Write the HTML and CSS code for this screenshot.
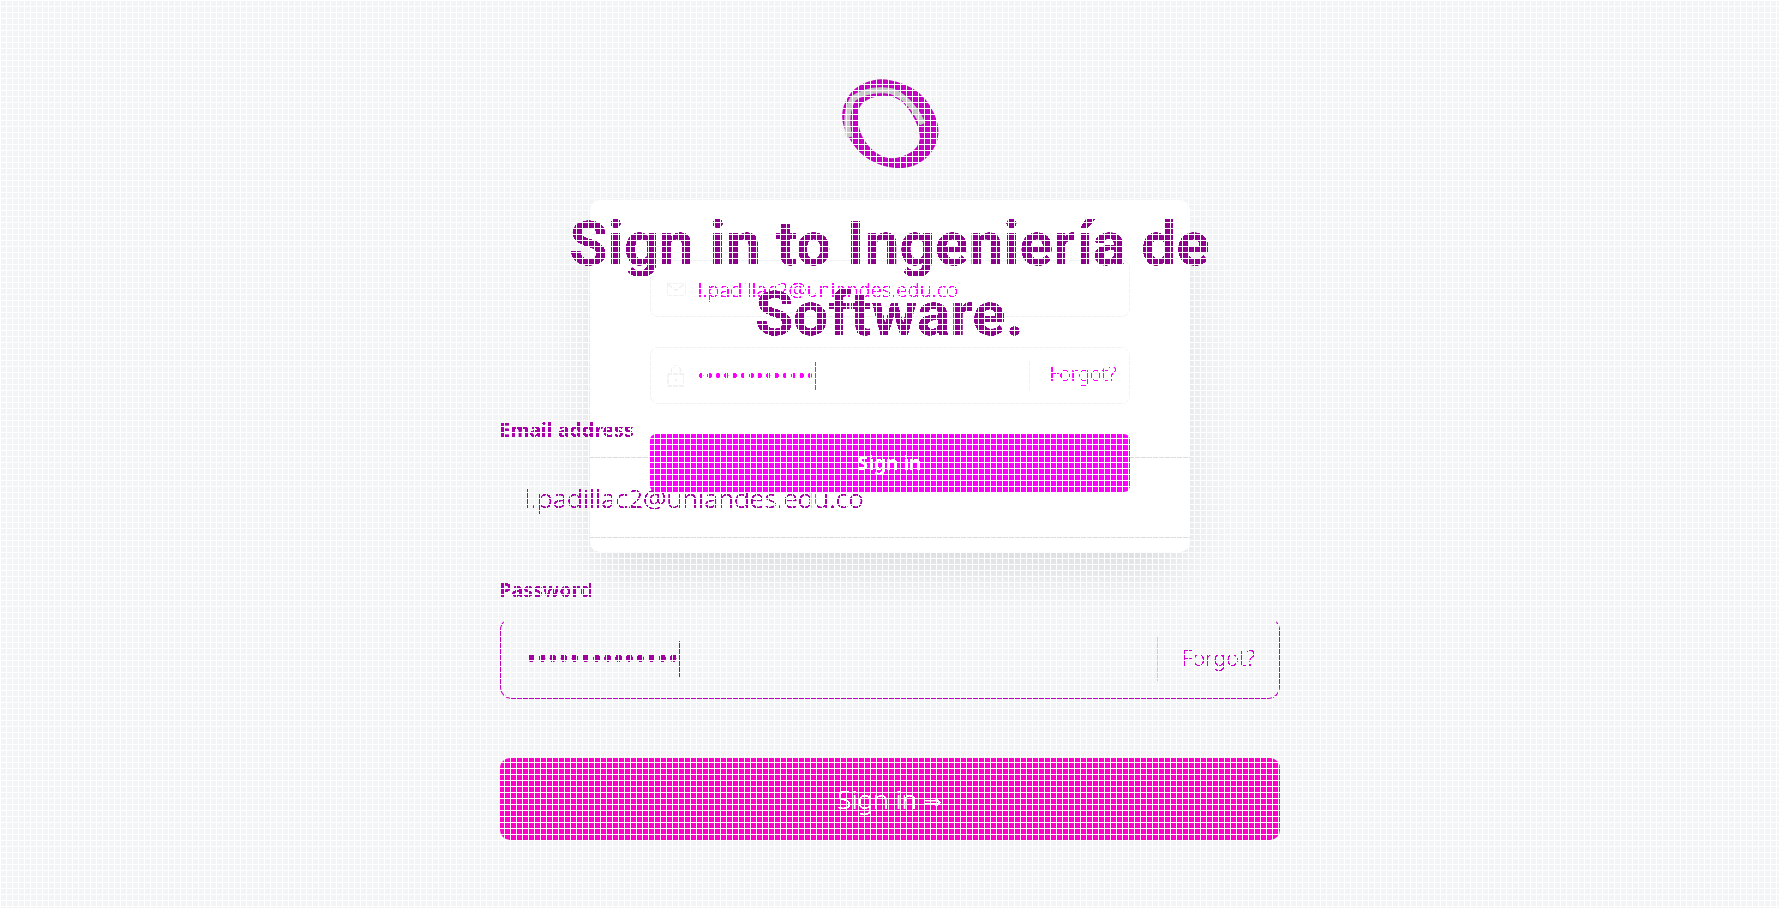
FILE: index.html
```html
<!DOCTYPE html>
<html lang="en">
<head>
    <meta charset="UTF-8">
    <meta name="viewport" content="width=device-width, initial-scale=1.0">
    <title>Sign in to Ingeniería de Software</title>
    <link rel="stylesheet" href="styles.css">
</head>
<body>
    <!-- hard edge on the text, no soft antialiasing -->
    <svg class="defs" width="0" height="0">
        <filter id="hard-edge" color-interpolation-filters="sRGB">
            <feComponentTransfer>
                <feFuncA type="linear" slope="6" intercept="-2.4"/>
            </feComponentTransfer>
        </filter>
        <filter id="hard-edge-thin" color-interpolation-filters="sRGB">
            <feComponentTransfer>
                <feFuncA type="linear" slope="5" intercept="-1.1"/>
            </feComponentTransfer>
        </filter>
    </svg>

    <main class="stage">
        <div class="card-layer">
            <div class="card">
                <div class="card-rule card-rule-top"></div>
                <div class="card-rule card-rule-bottom"></div>

                <div class="mini-field">
                    <svg class="mini-icon" viewBox="0 0 20 14" width="20" height="14" fill="none" stroke="#eeeeee" stroke-width="1.5">
                        <rect x="1" y="1" width="18" height="12" rx="1"/>
                        <path d="M1 2l9 6 9-6"/>
                    </svg>
                    <span class="mini-value hard-thin">l.padillac2@uniandes.edu.co</span>
                </div>

                <div class="mini-field">
                    <svg class="mini-icon" viewBox="0 0 20 22" width="20" height="22" fill="none" stroke="#eeeeee" stroke-width="1.5">
                        <rect x="2" y="9" width="16" height="12" rx="1"/>
                        <path d="M5.500 9V5.500a4.500 4.500 0 0 1 9 0V9"/>
                        <path d="M10 13.500v3"/>
                    </svg>
                    <span class="mini-dots hard">••••••••••••••</span>
                    <span class="mini-caret"></span>
                    <a class="mini-forgot" href="#"><span class="hard">Forgot?</span></a>
                </div>

                <button class="mini-btn"><span class="hard">Sign in</span></button>
            </div>
        </div>

        <div class="form-layer">
            <svg class="logo" viewBox="0 0 96 91" width="100" height="93">
                <path fill="#c400c4" fill-rule="evenodd" d="M61.500 6Q78 12 87 27Q96 42 95.500 53.500Q95 65 86.500 75Q78 85 64.500 87.500Q51 90 36 84Q21 78 12 65Q3 52 1.500 42Q0 32 5 22Q10 12 18 7.500Q26 3 35.500 1.500Q45 0 61.500 6ZM26.500 21Q35 17 45 17.500Q55 18 61.500 25Q68 32 72 40Q76 48 77 55Q78 62 74 67.500Q70 73 60.500 76.500Q51 80 43 77.500Q35 75 28 67.500Q21 60 18.500 51Q16 42 17 33.500Q18 25 26.500 21Z"/>
                <path fill="none" stroke="#c6c6c6" stroke-width="6" d="M8 58Q3 35 12 20Q28 9 50 13Q68 20 80 45"/>
            </svg>

            <h1 class="title hard-thin">Sign in to Ingeniería de Software.</h1>

            <label class="field-label field-label-email hard">Email address</label>
            <div class="field field-email">
                <span class="field-value hard-thin">l.padillac2@uniandes.edu.co</span>
            </div>

            <label class="field-label field-label-password hard">Password</label>
            <div class="field field-password">
                <span class="field-dots hard">••••••••••••••</span>
                <span class="field-caret"></span>
                <a class="field-forgot" href="#"><span class="hard">Forgot?</span></a>
            </div>

            <button class="submit-btn"><span class="hard-thin">Sign in <span class="arrow">⇒</span></span></button>
        </div>
    </main>
</body>
</html>
```

FILE: styles.css
```css
* {
    margin: 0;
    padding: 0;
    box-sizing: border-box;
    font-family: 'Noto Sans', sans-serif;
}

body {
    height: 908px;
    overflow: hidden;
    background-color: #f3f4f6;
}

/* white grid over the whole page */
body::after {
    content: '';
    position: fixed;
    inset: 0;
    z-index: 10;
    pointer-events: none;
    background-image:
        linear-gradient(to right, #fff 1px, transparent 1px),
        linear-gradient(to bottom, #fff 1px, transparent 1px);
    background-size: 6px 6px;
}

.defs {
    display: block;
}

.hard {
    filter: url(#hard-edge);
}

.hard-thin {
    filter: url(#hard-edge-thin);
}

.stage {
    display: grid;
    justify-content: center;
}

.card-layer,
.form-layer {
    grid-area: 1 / 1;
}

.card-layer {
    justify-self: center;
    padding-top: 200px;
}

.card {
    position: relative;
    width: 600px;
    height: 352px;
    padding: 60px;
    display: flex;
    flex-direction: column;
    gap: 30px;
    background-color: white;
    border-radius: 10px;
    box-shadow: 0 25px 50px -12px rgba(0,0,0,0.12);
}

.card-rule {
    position: absolute;
    left: 0;
    right: 0;
    height: 1px;
    background-color: #dcdcdc;
}

.card-rule-top {
    top: 257px;
}

.card-rule-bottom {
    top: 337px;
}

.mini-field {
    position: relative;
    height: 57px;
    padding-left: 15px;
    display: flex;
    align-items: center;
    border: 1px solid #f0f2f5;
    border-radius: 8px;
}

.mini-icon {
    flex: none;
    margin-right: 12px;
}

.mini-value {
    font-size: 20.300px;
    font-weight: 300;
    color: #ff00ff;
}

.mini-dots {
    font-size: 20px;
    letter-spacing: 0.850px;
    color: #ff00ff;
}

.mini-caret {
    width: 1px;
    height: 28px;
    background-color: #ff00ff;
}

.mini-forgot {
    margin-left: auto;
    align-self: stretch;
    width: 100px;
    margin-top: 12px;
    margin-bottom: 12px;
    padding-left: 20px;
    line-height: 28px;
    border-left: 1px solid #f0f2f5;
    font-size: 19.500px;
    font-weight: 300;
    color: #ff00ff;
    text-decoration: none;
}

.mini-btn {
    position: relative;
    z-index: 1;
    height: 58px;
    border: none;
    border-radius: 6px;
    background-color: #ff00ff;
    color: white;
    font-size: 19px;
    font-weight: 700;
}

.form-layer {
    position: relative;
    width: 780px;
    padding-top: 78px;
    display: flex;
    flex-direction: column;
}

.logo {
    align-self: center;
    margin-bottom: 38px;
}

.title {
    margin: 0 -40px;
    font-family: Roboto, sans-serif;
    font-size: 62px;
    line-height: 70px;
    font-weight: 700;
    color: #8f008f;
    text-align: center;
}

.field-label {
    display: block;
    height: 24px;
    font-size: 19.500px;
    line-height: 24px;
    font-weight: 700;
    color: #a800a8;
}

.field-label-email {
    margin-top: 69px;
    margin-bottom: 15px;
}

.field-label-password {
    margin-top: 40px;
    margin-bottom: 16px;
}

.field {
    height: 81px;
    padding-left: 25px;
    display: flex;
    align-items: center;
    border-radius: 12px;
}

.field-email {
    padding-left: 24px;
    border: 1px solid transparent;
}

.field-password {
    border: 1px solid #c000c0;
    border-top-color: transparent;
}

.field-value {
    font-size: 26.400px;
    font-weight: 300;
    color: #aa00aa;
}

.field-dots {
    font-size: 30px;
    letter-spacing: -0.350px;
    color: #a000a0;
}

.field-caret {
    width: 1px;
    height: 36px;
    background-color: #a000a0;
}

.field-forgot {
    margin-left: auto;
    width: 122px;
    height: 44px;
    padding-left: 24px;
    line-height: 42px;
    border-left: 1px solid #cccccc;
    font-size: 21.500px;
    font-weight: 300;
    color: #d000d0;
    text-decoration: none;
}

.submit-btn {
    height: 82px;
    margin-top: 59px;
    border: none;
    border-radius: 10px;
    background-color: #ff00c8;
    color: white;
    font-size: 26px;
    font-weight: 300;
}

.arrow {
    font-family: 'DejaVu Sans', sans-serif;
    font-size: 21px;
}
```
